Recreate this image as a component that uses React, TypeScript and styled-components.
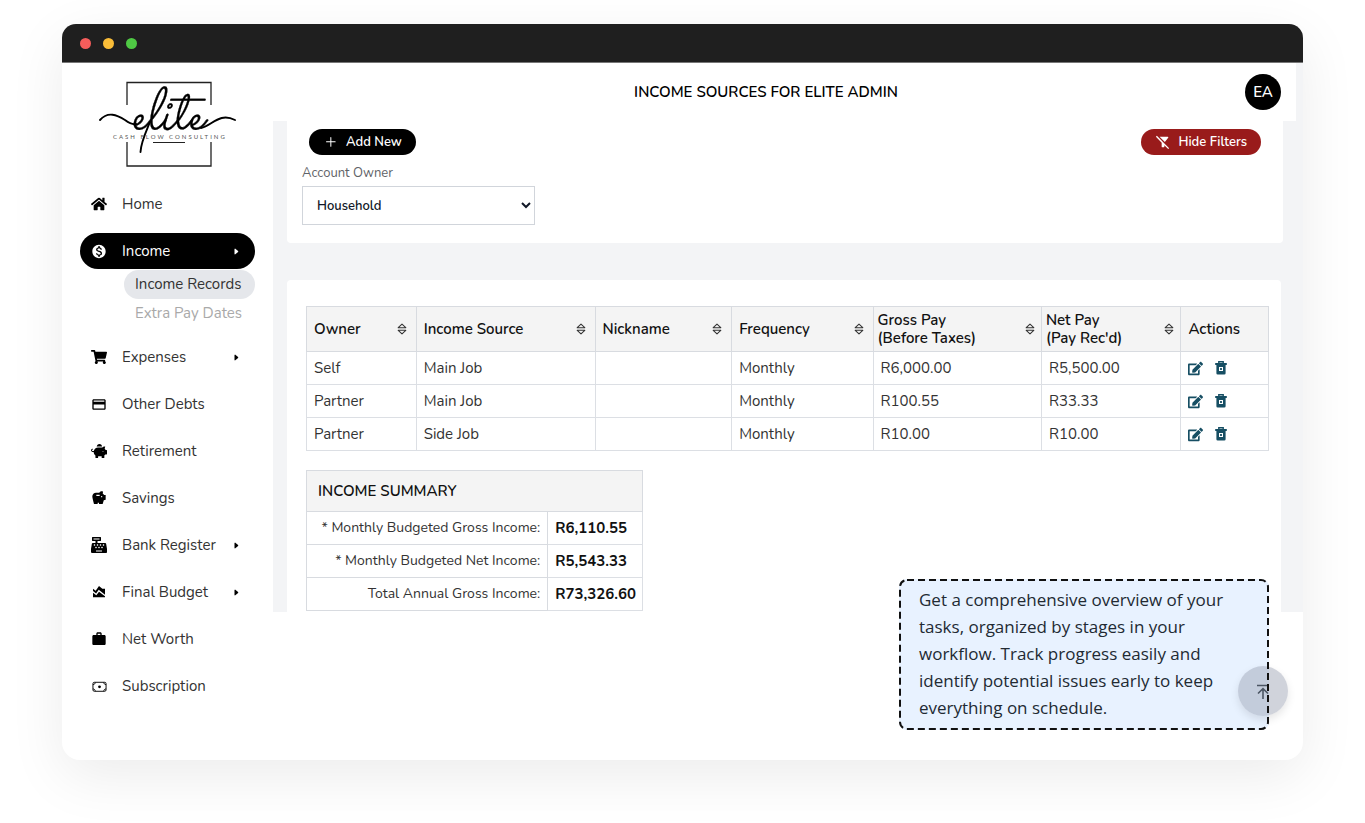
import React from 'react';
import styled, { createGlobalStyle } from 'styled-components';
import { FaHome, FaShoppingCart, FaPiggyBank, FaCashRegister, FaEdit } from 'react-icons/fa';
import {
  MdMonetizationOn,
  MdOutlineCreditCard,
  MdSavings,
  MdAreaChart,
  MdWork,
  MdFilterAltOff,
} from 'react-icons/md';
import { BsCaretRightFill } from 'react-icons/bs';
import { GoPlus } from 'react-icons/go';

const GlobalStyle = createGlobalStyle`
  *, *::before, *::after { box-sizing: border-box; }
  body {
    margin: 0;
    background: #ffffff;
    color: #333333;
    font-family: Nunito, "Open Sans", "Noto Sans", sans-serif;
    font-size: 15px;
    line-height: 20px;
  }
  button, select { font: inherit; }
`;

const Page = styled.div`
  padding: 24px 62px 62px;
`;

const Window = styled.div`
  position: relative;
  min-height: 736px;
  background: #ffffff;
  border-radius: 18px;
  box-shadow: 0 16px 56px rgba(0, 0, 0, 0.08);
`;

const TitleBar = styled.div`
  display: flex;
  align-items: center;
  gap: 12px;
  height: 39px;
  padding: 0 18px;
  background: #1f1f1f;
  border-bottom: 1px solid #777777;
  border-radius: 14px 14px 0 0;
`;

const Dot = styled.span<{ $color: string }>`
  width: 11px;
  height: 11px;
  border-radius: 50%;
  background: ${(p) => p.$color};
`;

const Layout = styled.div`
  display: flex;
  align-items: flex-start;
`;

const Sidebar = styled.aside`
  flex: 0 0 211px;
  padding: 9px 18px 0;
`;

const Logo = styled.svg`
  display: block;
  width: 140px;
  height: 96px;
  margin: 0 0 18px 18px;
  overflow: visible;
`;

const NavList = styled.ul`
  display: flex;
  flex-direction: column;
  gap: 11px;
  margin: 0;
  padding: 0;
  list-style: none;
`;

const NavLink = styled.a<{ $active?: boolean }>`
  display: flex;
  align-items: center;
  height: 36px;
  padding: 0 15px 0 11px;
  border-radius: 18px;
  color: ${(p) => (p.$active ? '#ffffff' : '#333333')};
  background: ${(p) => (p.$active ? '#000000' : 'transparent')};
  text-decoration: none;
`;

const NavIcon = styled.span<{ $active?: boolean }>`
  display: flex;
  justify-content: center;
  width: 16px;
  margin-right: 15px;
  color: ${(p) => (p.$active ? '#ffffff' : '#000000')};
`;

const NavText = styled.span`
  flex: 1;
  white-space: nowrap;
`;

const Caret = styled(BsCaretRightFill)<{ $active?: boolean }>`
  width: 8px;
  height: 9px;
  color: ${(p) => (p.$active ? '#ffffff' : '#000000')};
`;

const SubList = styled.ul`
  margin: 1px 0 0 44px;
  padding: 0;
  list-style: none;
`;

const SubLink = styled.a<{ $current?: boolean }>`
  display: block;
  padding: 0 11px;
  border-radius: 15px;
  line-height: 29px;
  white-space: nowrap;
  text-decoration: none;
  color: ${(p) => (p.$current ? '#333333' : '#a9a9a9')};
  background: ${(p) => (p.$current ? '#e5e7eb' : 'transparent')};
`;

const Main = styled.main`
  flex: 1;
  min-width: 0;
  background: #f3f4f6;
`;

const Header = styled.header`
  display: flex;
  align-items: center;
  height: 58px;
  margin-right: 7px;
  padding: 0 15px 0 14px;
  background: #ffffff;
`;

const Title = styled.h1`
  flex: 1;
  margin: 0;
  text-align: center;
  font-size: 15px;
  font-weight: 600;
  line-height: 20px;
  color: #000000;
`;

const Avatar = styled.button`
  width: 36px;
  height: 36px;
  padding: 0;
  border: 0;
  border-radius: 50%;
  background: #000000;
  color: #ffffff;
  font-weight: 600;
`;

const FilterPanel = styled.section`
  margin: 0 20px 0 14px;
  padding: 8px 22px 18px 15px;
  background: #ffffff;
  border-radius: 0 0 4px 4px;
`;

const Toolbar = styled.div`
  display: flex;
  justify-content: space-between;
  padding-left: 7px;
`;

const PillButton = styled.button<{ $color: string }>`
  display: flex;
  align-items: center;
  gap: 7px;
  height: 26px;
  padding: 0 14px;
  border: 0;
  border-radius: 13px;
  background: ${(p) => p.$color};
  color: #ffffff;
  font-size: 13px;
  font-weight: 600;
`;

const Field = styled.div`
  display: flex;
  flex-direction: column;
  width: 233px;
  margin-top: 8px;
`;

const Label = styled.label`
  margin-bottom: 3px;
  font-size: 13px;
  line-height: 20px;
  color: #5f6368;
`;

const Select = styled.select`
  height: 39px;
  padding: 0 0 0 10px;
  border: 1px solid #d1d5db;
  border-radius: 0;
  background: #ffffff;
  color: #111827;
  font-size: 13px;
  font-weight: 600;
`;

const DataPanel = styled.section`
  margin: 37px 22px 0 14px;
  padding: 26px 12px 1px 19px;
  background: #ffffff;
  border-radius: 4px 4px 0 0;
`;

const Table = styled.table`
  border-collapse: collapse;
`;

const IncomeTable = styled(Table)`
  width: 100%;
  table-layout: fixed;
`;

const SummaryTable = styled(Table)`
  width: 337px;
  margin-top: 19px;
`;

const HeadCell = styled.th<{ $width?: number; $tight?: boolean }>`
  width: ${(p) => (p.$width ? `${p.$width}%` : 'auto')};
  height: 45px;
  padding: 0 ${(p) => (p.$tight ? 6 : 9)}px 0 ${(p) => (p.$tight ? 4 : 7)}px;
  border: 1px solid #d8dbe0;
  background: #f4f4f4;
  color: #111111;
  text-align: left;
  font-weight: 600;
  line-height: 18px;
`;

const HeadContent = styled.div`
  display: flex;
  align-items: center;
  justify-content: space-between;
  white-space: pre;
`;

const SortButton = styled.button`
  display: flex;
  padding: 0;
  border: 0;
  background: none;
  color: #333333;
`;

const Cell = styled.td`
  height: 33px;
  padding: 0 7px;
  border: 1px solid #dcdfe4;
`;

const SummaryHead = styled.th`
  height: 41px;
  padding: 0 11px;
  border: 1px solid #d8dbe0;
  background: #f4f4f4;
  color: #111111;
  text-align: left;
  font-weight: 600;
`;

const SummaryLabel = styled.th`
  height: 33px;
  padding: 0 7px;
  border: 1px solid #d8dbe0;
  text-align: right;
  font-size: 14px;
  font-weight: 400;
  white-space: nowrap;
`;

const SummaryValue = styled(Cell)`
  width: 94px;
  padding: 0 6px 0 7px;
  color: #111111;
  font-weight: 700;
`;

const Actions = styled.div`
  display: flex;
  align-items: center;
  gap: 10px;
`;

const IconButton = styled.button`
  display: flex;
  padding: 0;
  border: 0;
  background: none;
  color: #164e63;
`;

const Callout = styled.p`
  position: absolute;
  right: 34px;
  bottom: 30px;
  width: 370px;
  margin: 0;
  padding: 7px 20px 9px;
  background: #e8f2ff;
  color: #222a33;
  border-radius: 8px;
  font-family: "Segoe UI", "Open Sans", sans-serif;
  font-size: 17px;
  line-height: 27px;
`;

const CalloutBorder = styled.svg`
  position: absolute;
  z-index: 1;
  inset: 0;
  width: 100%;
  height: 100%;
  overflow: visible;
  pointer-events: none;
`;

const TopButton = styled.button`
  position: absolute;
  right: 15px;
  bottom: 44px;
  display: flex;
  align-items: center;
  justify-content: center;
  width: 50px;
  height: 50px;
  border: 0;
  border-radius: 50%;
  background: rgba(150, 158, 175, 0.45);
  box-shadow: 0 4px 8px rgba(0, 0, 0, 0.1);
  color: #4b5563;
`;

const SortIcon = () => (
  <svg width="10" height="12" viewBox="0 0 10 12" fill="none" stroke="currentColor" strokeLinejoin="round">
    <path d="M5 1.200 8.800 4.700H1.200ZM5 10.800 8.800 7.300H1.200Z" strokeWidth="1.1" />
  </svg>
);

const TrashIcon = () => (
  <svg width="16" height="16" viewBox="0 0 16 16" fill="none" stroke="currentColor">
    <path d="M5.800 3V1.700H10.200V3" strokeWidth="1.4" />
    <path d="M2.200 4H13.800" strokeWidth="2" />
    <path
      d="M3.400 4.500H12.600V13.200a1.300 1.300 0 0 1-1.300 1.300H4.700a1.300 1.300 0 0 1-1.300-1.300Z"
      fill="currentColor"
      stroke="none"
    />
    <rect x="6" y="7" width="4" height="4" fill="#ffffff" stroke="none" />
    <path d="M7 8 9 10M9 8 7 10" strokeWidth="0.9" />
  </svg>
);

const CashIcon = () => (
  <svg width="15" height="15" viewBox="0 0 16 16" fill="none" stroke="currentColor" strokeWidth="1">
    <rect x="1" y="3.500" width="14" height="9.600" rx="1.500" />
    <path d="M1 6c1.600 0 2.400-1 2.400-2.400M15 6c-1.600 0-2.400-1-2.400-2.400M1 10.600c1.600 0 2.400 1 2.400 2.400M15 10.600c-1.600 0-2.400 1-2.400 2.400" />
    <circle cx="8" cy="8.300" r="1.500" fill="currentColor" stroke="none" />
  </svg>
);

const EliteLogo = () => (
  <Logo viewBox="98 72 140 96" role="img" aria-label="Elite Cash Flow Consulting">
    <g fill="none" stroke="#222222" strokeWidth="1.3">
      <path d="M127 105V82.500H211V105M127 142V166H211V142" />
      <path d="M153 142.500H185" strokeWidth="1" />
    </g>
    <g fill="none" stroke="#000000" strokeWidth="1.9" strokeLinecap="round">
      <path d="M100 120C108 111 117 115 125 120C129 123 132 125 136 124" />
      <path d="M201 128C212 126 219 112 235 120" />
      <path d="M150 122C146 132 141 142 140.500 152" />
    </g>
    <text
      x="131"
      y="129"
      fill="#000000"
      stroke="#000000"
      strokeWidth="0.3"
      fontFamily="Sacramento, Allura, 'Great Vibes', 'Alex Brush', 'Dancing Script', Pacifico, Caveat, 'Lato Light', Lato"
      fontStyle="italic"
      fontSize="60"
    >
      elite
    </text>
    <text x="113" y="139" fill="#555555" fontFamily="Lato, sans-serif" fontSize="6" letterSpacing="2">
      CASH FLOW CONSULTING
    </text>
  </Logo>
);

type NavEntry = { label: string; icon: React.ReactNode; expands?: boolean; active?: boolean; children?: string[] };

const navEntries: NavEntry[] = [
  { label: 'Home', icon: <FaHome size={16} /> },
  {
    label: 'Income',
    icon: <MdMonetizationOn size={17} />,
    expands: true,
    active: true,
    children: ['Income Records', 'Extra Pay Dates'],
  },
  { label: 'Expenses', icon: <FaShoppingCart size={16} />, expands: true },
  { label: 'Other Debts', icon: <MdOutlineCreditCard size={17} /> },
  { label: 'Retirement', icon: <FaPiggyBank size={16} /> },
  { label: 'Savings', icon: <MdSavings size={16} /> },
  { label: 'Bank Register', icon: <FaCashRegister size={16} />, expands: true },
  { label: 'Final Budget', icon: <MdAreaChart size={16} />, expands: true },
  { label: 'Net Worth', icon: <MdWork size={16} /> },
  { label: 'Subscription', icon: <CashIcon /> },
];

const columns = [
  { label: 'Owner', width: 11.4 },
  { label: 'Income Source', width: 18.6 },
  { label: 'Nickname', width: 14.2 },
  { label: 'Frequency', width: 14.7 },
  { label: 'Gross Pay\n(Before Taxes)', width: 17.5, tight: true },
  { label: "Net Pay\n(Pay Rec'd)", width: 14.5, tight: true },
];

const records = [
  ['Self', 'Main Job', '', 'Monthly', 'R6,000.00', 'R5,500.00'],
  ['Partner', 'Main Job', '', 'Monthly', 'R100.55', 'R33.33'],
  ['Partner', 'Side Job', '', 'Monthly', 'R10.00', 'R10.00'],
];

const summary = [
  ['* Monthly Budgeted Gross Income:', 'R6,110.55'],
  ['* Monthly Budgeted Net Income:', 'R5,543.33'],
  ['Total Annual Gross Income:', 'R73,326.60'],
];

export default function App() {
  return (
    <>
      <GlobalStyle />
      <Page>
        <Window>
          <TitleBar>
            <Dot $color="#f55d5b" />
            <Dot $color="#fabd38" />
            <Dot $color="#4fc944" />
          </TitleBar>
          <Layout>
            <Sidebar>
              <EliteLogo />
              <nav aria-label="Main">
                <NavList>
                  {navEntries.map((entry) => (
                    <li key={entry.label}>
                      <NavLink href="#" $active={entry.active}>
                        <NavIcon $active={entry.active}>{entry.icon}</NavIcon>
                        <NavText>{entry.label}</NavText>
                        {entry.expands && <Caret $active={entry.active} />}
                      </NavLink>
                      {entry.children && (
                        <SubList>
                          {entry.children.map((child, i) => (
                            <li key={child}>
                              <SubLink href="#" $current={i === 0}>
                                {child}
                              </SubLink>
                            </li>
                          ))}
                        </SubList>
                      )}
                    </li>
                  ))}
                </NavList>
              </nav>
            </Sidebar>
            <Main>
              <Header>
                <Title>INCOME SOURCES FOR ELITE ADMIN</Title>
                <Avatar>EA</Avatar>
              </Header>
              <FilterPanel>
                <Toolbar>
                  <PillButton $color="#000000">
                    <GoPlus size={16} />
                    Add New
                  </PillButton>
                  <PillButton $color="#991b1b">
                    <MdFilterAltOff size={16} />
                    Hide Filters
                  </PillButton>
                </Toolbar>
                <Field>
                  <Label htmlFor="owner">Account Owner</Label>
                  <Select id="owner" defaultValue="Household">
                    <option>Household</option>
                    <option>Self</option>
                    <option>Partner</option>
                  </Select>
                </Field>
              </FilterPanel>
              <DataPanel>
                <IncomeTable>
                  <thead>
                    <tr>
                      {columns.map((column) => (
                        <HeadCell key={column.label} $width={column.width} $tight={column.tight}>
                          <HeadContent>
                            {column.label}
                            <SortButton aria-label="Sort">
                              <SortIcon />
                            </SortButton>
                          </HeadContent>
                        </HeadCell>
                      ))}
                      <HeadCell>Actions</HeadCell>
                    </tr>
                  </thead>
                  <tbody>
                    {records.map((record, row) => (
                      <tr key={row}>
                        {record.map((value, i) => (
                          <Cell key={i}>{value}</Cell>
                        ))}
                        <Cell>
                          <Actions>
                            <IconButton aria-label="Edit">
                              <FaEdit size={15} />
                            </IconButton>
                            <IconButton aria-label="Delete">
                              <TrashIcon />
                            </IconButton>
                          </Actions>
                        </Cell>
                      </tr>
                    ))}
                  </tbody>
                </IncomeTable>
                <SummaryTable>
                  <thead>
                    <tr>
                      <SummaryHead colSpan={2}>INCOME SUMMARY</SummaryHead>
                    </tr>
                  </thead>
                  <tbody>
                    {summary.map(([label, value]) => (
                      <tr key={label}>
                        <SummaryLabel scope="row">{label}</SummaryLabel>
                        <SummaryValue>{value}</SummaryValue>
                      </tr>
                    ))}
                  </tbody>
                </SummaryTable>
              </DataPanel>
            </Main>
          </Layout>
          <Callout>
            <CalloutBorder aria-hidden="true">
              <rect
                x="1"
                y="1"
                width="368"
                height="149"
                rx="7"
                fill="none"
                stroke="#111111"
                strokeWidth="2"
                strokeDasharray="7 4"
              />
            </CalloutBorder>
            Get a comprehensive overview of your tasks, organized by stages in your workflow. Track progress easily and
            identify potential issues early to keep everything on schedule.
          </Callout>
          <TopButton aria-label="Back to top">
            <svg width="12" height="15" viewBox="0 0 12 15" fill="none" stroke="currentColor" strokeWidth="1.6">
              <path d="M0 1.500H12M6 15V5M1 9.500 6 4.700 11 9.500" />
            </svg>
          </TopButton>
        </Window>
      </Page>
    </>
  );
}
